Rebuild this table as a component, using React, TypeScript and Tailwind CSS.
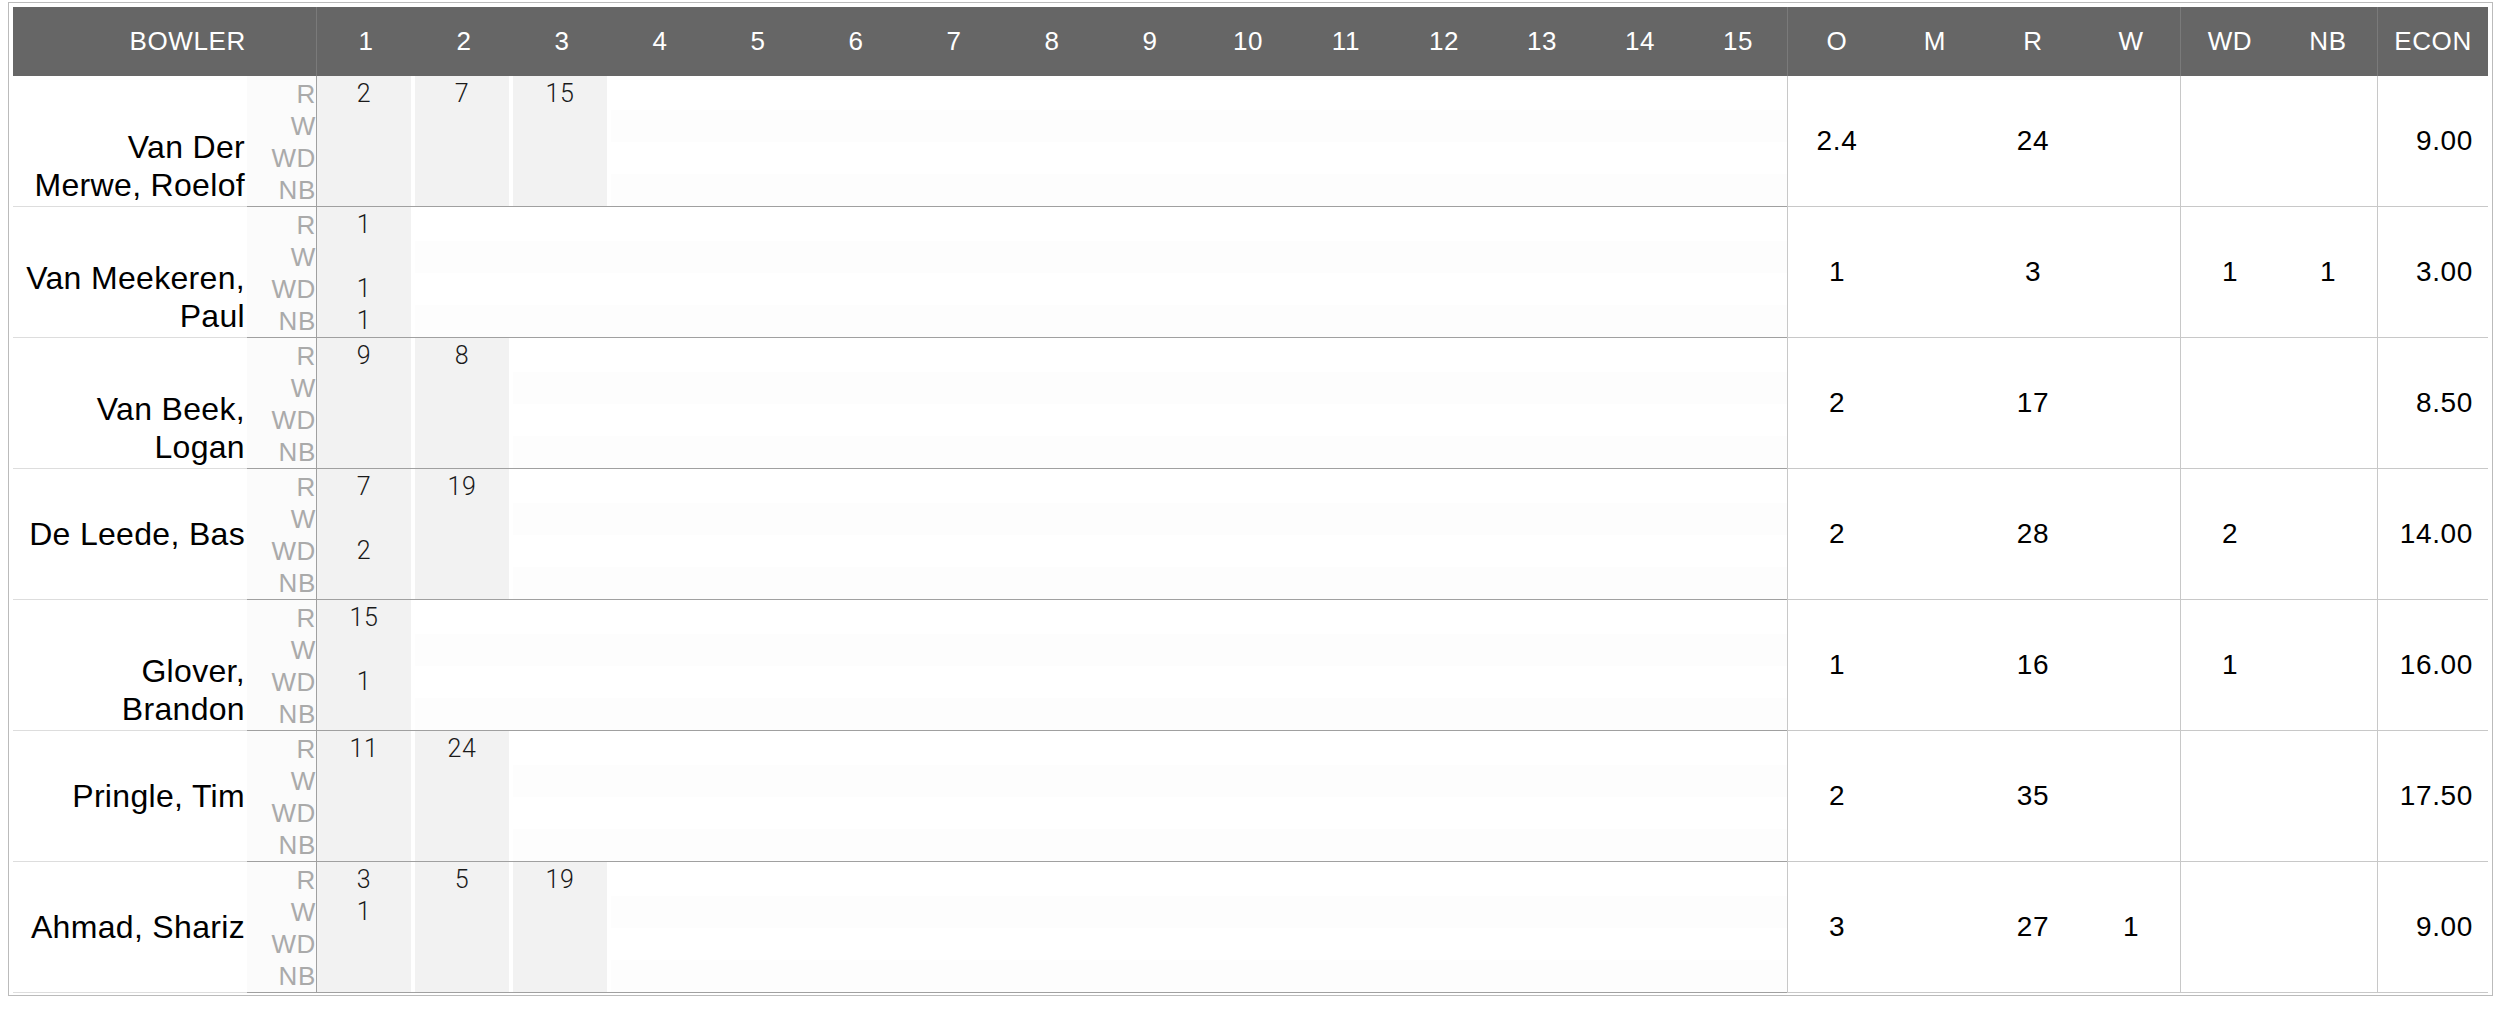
import React from "react";

type Over = { r?: string; w?: string; wd?: string; nb?: string };

type Bowler = {
  name: string[];
  overs: Over[];
  o: string;
  m: string;
  r: string;
  w: string;
  wd: string;
  nb: string;
  econ: string;
};

const bowlers: Bowler[] = [
  { name: ["Van Der", "Merwe, Roelof"], overs: [{ r: "2" }, { r: "7" }, { r: "15" }], o: "2.4", m: "", r: "24", w: "", wd: "", nb: "", econ: "9.00" },
  { name: ["Van Meekeren,", "Paul"], overs: [{ r: "1", wd: "1", nb: "1" }], o: "1", m: "", r: "3", w: "", wd: "1", nb: "1", econ: "3.00" },
  { name: ["Van Beek,", "Logan"], overs: [{ r: "9" }, { r: "8" }], o: "2", m: "", r: "17", w: "", wd: "", nb: "", econ: "8.50" },
  { name: ["De Leede, Bas"], overs: [{ r: "7", wd: "2" }, { r: "19" }], o: "2", m: "", r: "28", w: "", wd: "2", nb: "", econ: "14.00" },
  { name: ["Glover,", "Brandon"], overs: [{ r: "15", wd: "1" }], o: "1", m: "", r: "16", w: "", wd: "1", nb: "", econ: "16.00" },
  { name: ["Pringle, Tim"], overs: [{ r: "11" }, { r: "24" }], o: "2", m: "", r: "35", w: "", wd: "", nb: "", econ: "17.50" },
  { name: ["Ahmad, Shariz"], overs: [{ r: "3", w: "1" }, { r: "5" }, { r: "19" }], o: "3", m: "", r: "27", w: "1", wd: "", nb: "", econ: "9.00" },
];

const overNums = Array.from({ length: 15 }, (_, i) => i + 1);
const subRows: (keyof Over)[] = ["r", "w", "wd", "nb"];
const labels = ["R", "W", "WD", "NB"];

function OverCell({ over }: { over?: Over }) {
  return (
    <div className="w-[98px] h-full">
      <div className={over ? "h-full mr-[4px] bg-[#f2f2f2] pt-[2px]" : "h-full pt-[2px]"}>
        {subRows.map((k, i) => (
          <div
            key={k}
            className={
              "h-[32px] leading-[32px] text-center text-[25px] text-[#1a1a1a] font-['Roboto',sans-serif] font-light " +
              (!over && i % 2 === 1 ? "bg-[#fdfdfd]" : "")
            }
          >
            {over ? over[k] : ""}
          </div>
        ))}
      </div>
    </div>
  );
}

function Total({ v }: { v: string }) {
  return <div className="w-[98px] flex items-center justify-center">{v}</div>;
}

function BowlerRow({ b }: { b: Bowler }) {
  const twoLine = b.name.length > 1;
  return (
    <div className="flex h-[131px]">
      <div
        className={
          "w-[234px] border-b border-[#dddddd] flex flex-col justify-center items-end pr-[2px] text-[32px] leading-[38px] tracking-[0.01em] text-black " +
          (twoLine ? "pt-[50px]" : "")
        }
      >
        {b.name.map((n) => (
          <div key={n} className="whitespace-nowrap">{n}</div>
        ))}
      </div>
      <div className="w-[69px] border-b border-[#a0a0a0] bg-[#fbfbfb] pt-[2px]">
        {labels.map((l) => (
          <div key={l} className="h-[32px] leading-[32px] text-right text-[26px] text-[#aaaaaa]">
            {l}
          </div>
        ))}
      </div>
      <div className="flex border-l border-b border-[#a0a0a0]">
        {overNums.map((n, i) => (
          <OverCell key={n} over={b.overs[i]} />
        ))}
      </div>
      <div className="flex border-l border-b border-[#c8c8c8] text-[28px] text-black">
        <Total v={b.o} />
        <Total v={b.m} />
        <Total v={b.r} />
        <Total v={b.w} />
      </div>
      <div className="flex border-l border-b border-[#c8c8c8] text-[28px] text-black">
        <Total v={b.wd} />
        <Total v={b.nb} />
      </div>
      <div className="flex-1 flex items-center justify-end pr-[15px] border-l border-b border-[#c8c8c8] text-[28px] text-black">
        {b.econ}
      </div>
    </div>
  );
}

export default function App() {
  return (
    <div className="w-[2500px] h-[1010px] bg-white pt-[2px] pl-[8px] font-['Liberation_Sans',Arial,sans-serif] tracking-[0.04em]">
      <div className="w-[2485px] border border-[#bbbbbb] pt-[4px] px-[4px] pb-[2px]">
        <div className="flex h-[69px] bg-[#666666] text-white text-[26px]">
          <div className="w-[303px] flex items-center justify-end pr-[70px]">BOWLER</div>
          <div className="flex border-l border-[#7a7a7a]">
            {overNums.map((n) => (
              <div key={n} className="w-[98px] flex items-center justify-center">
                {n}
              </div>
            ))}
          </div>
          <div className="flex border-l border-[#7a7a7a]">
            {["O", "M", "R", "W"].map((h) => (
              <div key={h} className="w-[98px] flex items-center justify-center">
                {h}
              </div>
            ))}
          </div>
          <div className="flex border-l border-[#7a7a7a]">
            {["WD", "NB"].map((h) => (
              <div key={h} className="w-[98px] flex items-center justify-center">
                {h}
              </div>
            ))}
          </div>
          <div className="flex-1 flex items-center justify-center border-l border-[#7a7a7a]">ECON</div>
        </div>
        {bowlers.map((b) => (
          <BowlerRow key={b.name.join(" ")} b={b} />
        ))}
      </div>
    </div>
  );
}
